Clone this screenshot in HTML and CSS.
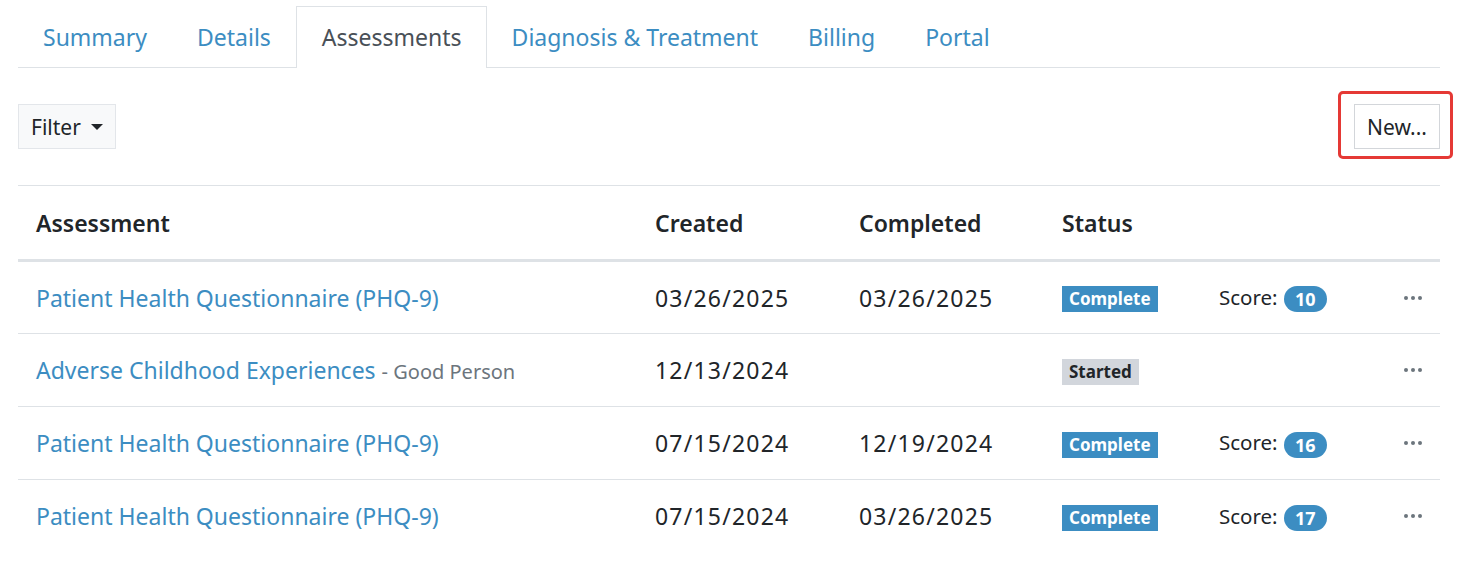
FILE: index.html
```html
<html>
    <head>
        <title>Assessments</title>
        <link rel="stylesheet" href="styles.css">
    </head>

    <body>
        <div class="Page">
            <!-- Pestañas -->
            <ul class="Tabs">
                <li class="Tab"><a href="#">Summary</a></li>
                <li class="Tab"><a href="#">Details</a></li>
                <li class="Tab Active"><a href="#">Assessments</a></li>
                <li class="Tab"><a href="#">Diagnosis &amp; Treatment</a></li>
                <li class="Tab"><a href="#">Billing</a></li>
                <li class="Tab"><a href="#">Portal</a></li>
            </ul>

            <!-- Barra de acciones -->
            <div class="Toolbar">
                <button class="Btn Filter">Filter <span class="Caret"></span></button>
                <button class="Btn New Marked">New...</button>
            </div>

            <!-- Tabla -->
            <table class="Tabla">
                <colgroup>
                    <col style="width: 619px">
                    <col style="width: 204px">
                    <col style="width: 203px">
                    <col style="width: 157px">
                    <col style="width: 184px">
                    <col>
                </colgroup>
                <thead>
                    <tr>
                        <th>Assessment</th>
                        <th>Created</th>
                        <th>Completed</th>
                        <th>Status</th>
                        <th></th>
                        <th></th>
                    </tr>
                </thead>
                <tbody>
                    <tr>
                        <td><a href="#">Patient Health Questionnaire (PHQ-9)</a></td>
                        <td class="Fecha">03/26/2025</td>
                        <td class="Fecha">03/26/2025</td>
                        <td><span class="Badge Complete">Complete</span></td>
                        <td class="Score">Score: <span class="Pill">10</span></td>
                        <td class="Acciones"><span class="Dots"><i></i><i></i><i></i></span></td>
                    </tr>
                    <tr>
                        <td><a href="#">Adverse Childhood Experiences</a> <span class="Sub">- Good Person</span></td>
                        <td class="Fecha">12/13/2024</td>
                        <td class="Fecha"></td>
                        <td><span class="Badge Started">Started</span></td>
                        <td class="Score"></td>
                        <td class="Acciones"><span class="Dots"><i></i><i></i><i></i></span></td>
                    </tr>
                    <tr>
                        <td><a href="#">Patient Health Questionnaire (PHQ-9)</a></td>
                        <td class="Fecha">07/15/2024</td>
                        <td class="Fecha">12/19/2024</td>
                        <td><span class="Badge Complete">Complete</span></td>
                        <td class="Score">Score: <span class="Pill">16</span></td>
                        <td class="Acciones"><span class="Dots"><i></i><i></i><i></i></span></td>
                    </tr>
                    <tr>
                        <td><a href="#">Patient Health Questionnaire (PHQ-9)</a></td>
                        <td class="Fecha">07/15/2024</td>
                        <td class="Fecha">03/26/2025</td>
                        <td><span class="Badge Complete">Complete</span></td>
                        <td class="Score">Score: <span class="Pill">17</span></td>
                        <td class="Acciones"><span class="Dots"><i></i><i></i><i></i></span></td>
                    </tr>
                </tbody>
            </table>
        </div>
    </body>
</html>
```

FILE: styles.css
```css
body{
    margin: 0;
    font-family: "Noto Sans", sans-serif;
    font-size: 23px;
    color: #212529;
    background: white;
}

a{
    color: #3c8dc2;
    text-decoration: none;
}

.Page{
    padding: 0 19px 0 18px;
}

.Tabs{
    display: flex;
    list-style: none;
    margin: 0;
    padding: 6px 0 0 0;
    border-bottom: 1px solid #dee2e6;
}

.Tab{
    border: 1px solid transparent;
    border-bottom: none;
    margin-bottom: -1px;
}

.Tab a{
    display: block;
    height: 60px;
    line-height: 60px;
    padding: 0 24px;
}

.Tab.Active{
    border-color: #dee2e6;
    background: white;
}

.Tab.Active a{
    color: #495057;
    height: 61px;
    padding: 0 24px 0 25px;
}

.Toolbar{
    display: flex;
    justify-content: space-between;
    align-items: center;
    margin-top: 36px;
    margin-bottom: 36px;
}

.Btn{
    font-family: inherit;
    font-size: 21px;
    color: #212529;
    height: 45px;
    border-radius: 0;
    cursor: pointer;
}

.Filter{
    background: #f8f9fa;
    border: 1px solid #e3e6ea;
    padding: 0 12px;
    display: flex;
    align-items: center;
    gap: 10px;
}

.Caret{
    border-top: 6px solid #212529;
    border-left: 6px solid transparent;
    border-right: 6px solid transparent;
}

.New{
    background: white;
    border: 1px solid #d3d6da;
    padding: 0 12px;
}

/* Recuadro rojo que marca el botón */
.Marked{
    position: relative;
}

.Marked::after{
    content: "";
    position: absolute;
    top: -14px;
    bottom: -11px;
    left: -17px;
    right: -14px;
    border: 3px solid #e53935;
    border-radius: 5px;
}

.Tabla{
    width: 100%;
    table-layout: fixed;
    border-collapse: collapse;
    border-top: 1px solid #dee2e6;
    font-size: 23px;
    color: #212529;
}

.Tabla th{
    text-align: left;
    font-weight: 600;
    height: 75px;
    padding: 0 18px;
    border-bottom: 3px solid #dee2e6;
}

.Tabla td{
    height: 73px;
    padding: 0 18px;
    white-space: nowrap;
    border-bottom: 1px solid #dee2e6;
}

.Tabla tbody tr:last-child td{
    border-bottom: none;
}

.Fecha{
    letter-spacing: 1.2px;
}

.Sub{
    color: #6c757d;
    font-size: 20px;
}

.Badge{
    display: inline-block;
    font-size: 17px;
    font-weight: 700;
    line-height: 26px;
    padding: 0 7px;
    vertical-align: middle;
    margin-top: 3px;
}

.Complete{
    background: #3c8dc2;
    color: white;
}

.Started{
    background: #d2d6dc;
    color: #212529;
}

.Score{
    font-size: 20.5px;
}

.Pill{
    display: inline-block;
    background: #3c8dc2;
    color: white;
    font-size: 18px;
    font-weight: 700;
    line-height: 26px;
    padding: 0 11px;
    margin-left: 1px;
    border-radius: 13px;
    vertical-align: middle;
}

.Acciones{
    text-align: right;
}

.Dots{
    display: inline-flex;
    gap: 3px;
    vertical-align: middle;
}

.Dots i{
    width: 4px;
    height: 4px;
    border-radius: 50%;
    background: #6c757d;
}
```
